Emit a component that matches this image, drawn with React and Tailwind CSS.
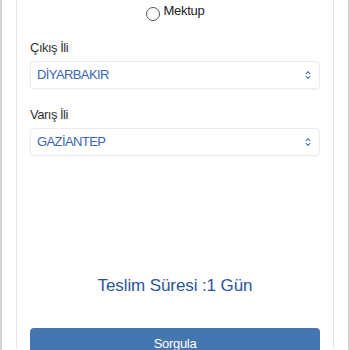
import { ChevronsUpDown } from 'lucide-react';

const Select = ({ value }) => {
    return (
        <div className="h-[28px] flex items-center justify-between pl-[6px] pr-[6px] bg-white border border-[#ececec] rounded-[4px] shadow-[0_1px_2px_rgba(0,0,0,0.04)]">
            <span className="text-[13px] tracking-[-0.6px] text-[#3a66b0]">{value}</span>
            <ChevronsUpDown size={10} strokeWidth={2.5} className="text-[#3a66b0]" />
        </div>
    );
};

const App = () => {
    return (
        <div className="h-[350px] overflow-hidden bg-white border-x-[2px] border-[#d4d4d4] px-[14px]" style={{ fontFamily: '"Liberation Sans", Arial, sans-serif' }}>
            <div className="h-full border-x border-[#e4e4e4] px-[13px]">
                <div className="h-[24px] flex items-center justify-center gap-[4px] -mt-[1px]">
                    <span className="w-[14px] h-[14px] rounded-full border border-[#555] mt-[6px]"></span>
                    <span className="text-[13px] tracking-[-0.3px] text-[#222]">Mektup</span>
                </div>

                <div className="mt-[17px] text-[13px] tracking-[-0.5px] text-[#333] leading-[16px]">Çıkış İli</div>
                <div className="mt-[5px]">
                    <Select value="DİYARBAKIR" />
                </div>

                <div className="mt-[18px] text-[13px] tracking-[-0.5px] text-[#333] leading-[16px]">Varış İli</div>
                <div className="mt-[5px]">
                    <Select value="GAZİANTEP" />
                </div>

                <div className="mt-[118px] text-center text-[17px] tracking-[-0.1px] text-[#2c5598] leading-[24px]">Teslim Süresi :1 Gün</div>

                <button className="mt-[30px] w-full h-[32px] bg-[#4676b0] rounded-[4px] text-white text-[13px] tracking-[-0.3px] flex items-start justify-center pt-[6px]">
                    Sorgula
                </button>
            </div>
        </div>
    );
};

export default App;
